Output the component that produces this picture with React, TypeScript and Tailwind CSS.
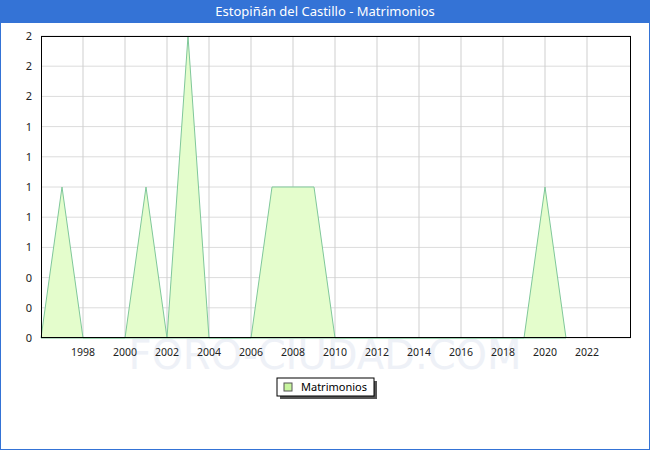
export default function App() {
  const X = (y: number) => 40 + (y - 1996) * 21;
  const Y = (v: number) => 337 - v * 151;
  const data: [number, number][] = [[1996,0],[1997,1],[1998,0],[2000,0],[2001,1],[2002,0],[2003,2],[2004,0],[2006,0],[2007,1],[2009,1],[2010,0],[2019,0],[2020,1],[2021,0]];
  const pts = data.map(([a, b]) => `${X(a)},${Y(b)}`).join(" ");
  const hy = Array.from({ length: 11 }, (_, i) => 35 + i * 30.2);
  const labels = ["2","2","2","1","1","1","1","1","0","0","0"];
  const xs = [1998,2000,2002,2004,2006,2008,2010,2012,2014,2016,2018,2020,2022];
  return (
    <div className="w-[650px] h-[450px] bg-white border border-[#3473d6] flex flex-col relative font-['DejaVu_Sans',sans-serif]">
      <div className="h-[22px] bg-[#3473d6] text-white text-[13px] flex items-center justify-center shrink-0">Estopiñán del Castillo - Matrimonios</div>
      <svg width="648" height="426" className="absolute left-0 top-0">
        <text x="324" y="368" textAnchor="middle" fontSize="40" fill="#eef1f7" fontFamily="DejaVu Sans">FORO-CIUDAD.COM</text>
        {hy.map((y, i) => <line key={i} x1="40" x2="630" y1={y} y2={y} stroke="#dcdcdc" />)}
        {xs.map(y => <line key={y} x1={X(y)} x2={X(y)} y1="35" y2="337" stroke="#cfcfcf" />)}
        <polygon points={`${pts} ${X(2021)},337`} fill="#e4fdcc" stroke="#7fc79a" strokeWidth="1" />
        <rect x="40.5" y="35.5" width="589" height="301" fill="none" stroke="#000" />
        {hy.map((y, i) => <text key={i} x="31" y={y + 4} textAnchor="end" fontSize="11" fill="#222">{labels[i]}</text>)}
        {xs.map(y => <text key={y} x={X(y)} y="355" textAnchor="middle" fontSize="10.5" fill="#222">{y}</text>)}
        <rect x="279" y="380" width="97" height="18" fill="#555" />
        <rect x="276" y="377" width="97" height="18" fill="#fff" stroke="#000" />
        <rect x="283" y="382" width="8" height="8" fill="#c8f59f" stroke="#555" />
        <text x="300" y="390" fontSize="11" fill="#000">Matrimonios</text>
        <text x="638" y="437" textAnchor="end" fontSize="9.5" fill="#000">http://www.foro-ciudad.com</text>
      </svg>
    </div>
  );
}
